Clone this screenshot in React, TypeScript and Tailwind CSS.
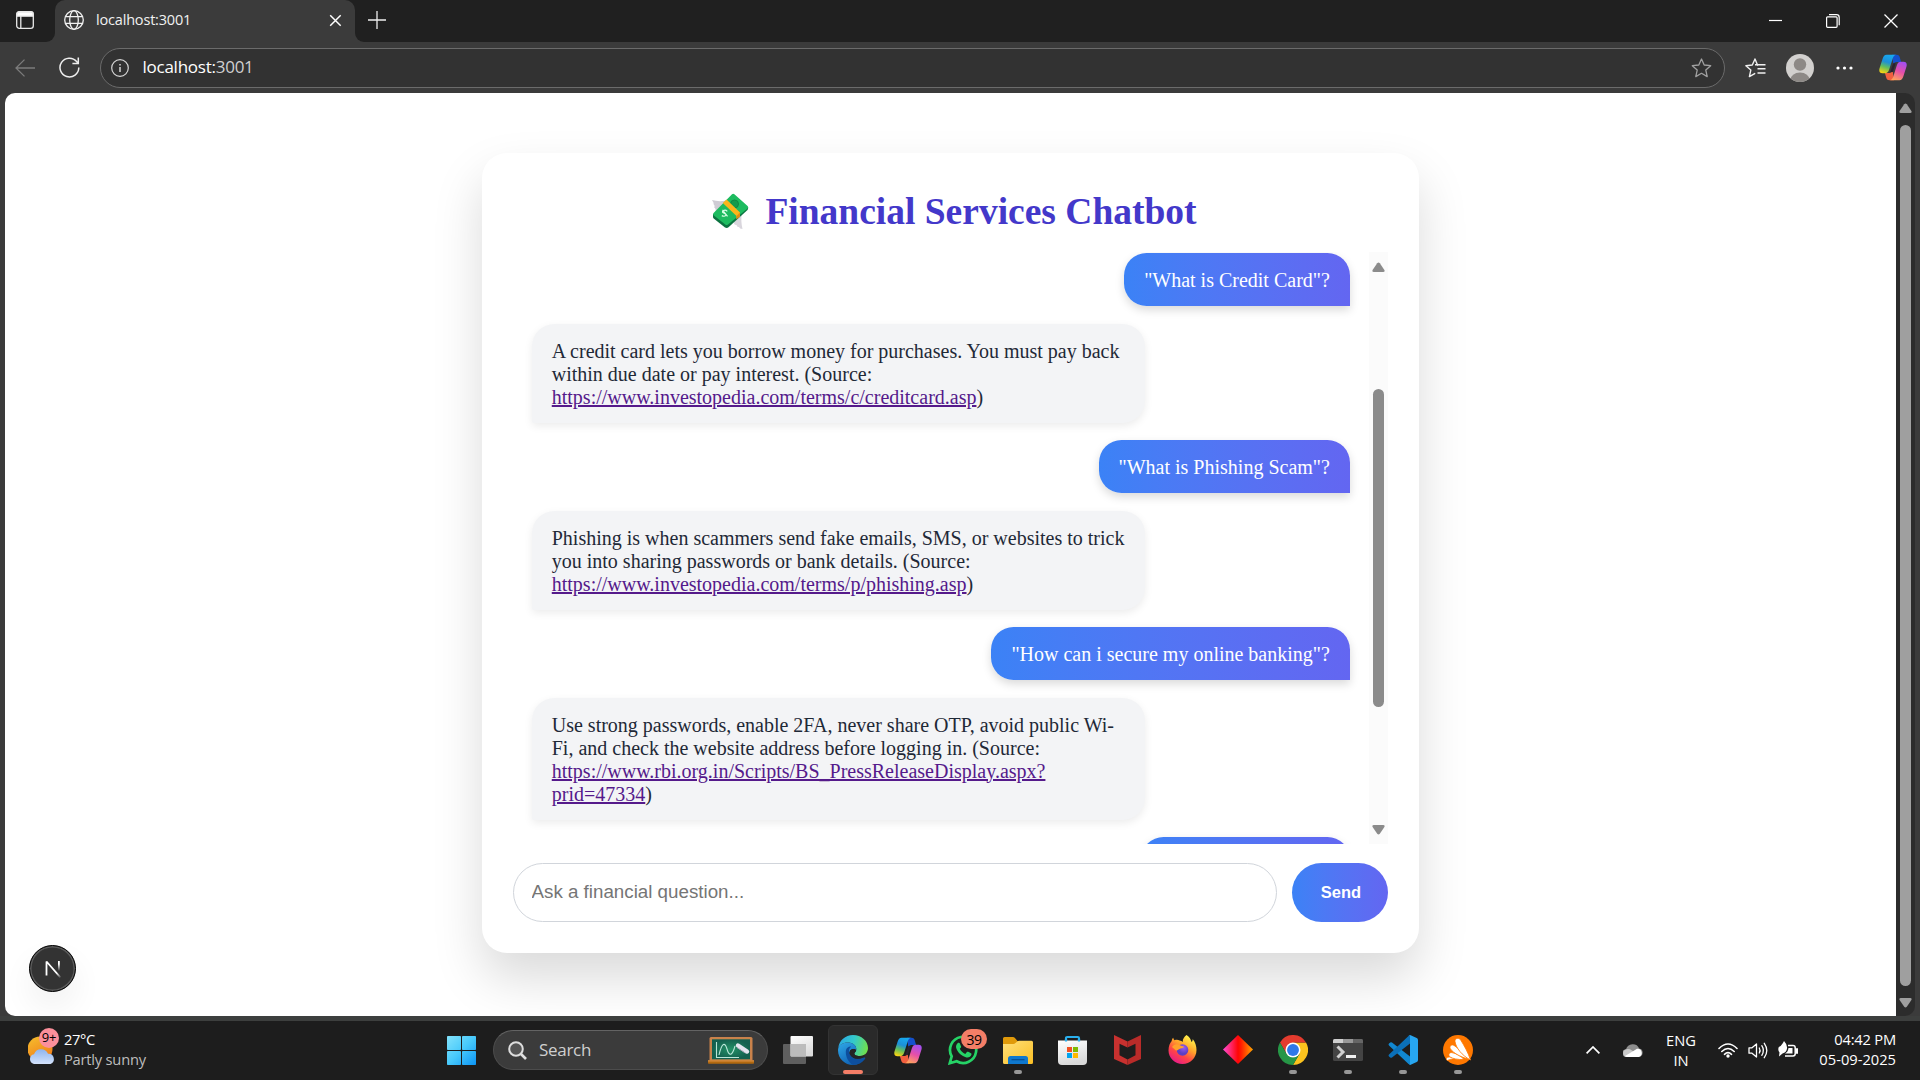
import React from "react";

const UI = "font-['Open_Sans','Noto_Sans',sans-serif]";

function TitleBar() {
  return (
    <div className="flex h-[42px] shrink-0 bg-[#3b3b3b]">
      <div className="flex h-[42px] w-[55px] items-center rounded-br-[9px] bg-[#202020] pl-4">
        <svg width="18" height="18" viewBox="0 0 18 18" className="-mt-0.5" fill="none" stroke="#e8e8e8" strokeWidth="1.3">
          <rect x="0.7" y="0.7" width="16.6" height="16.6" rx="2.6" />
          <path d="M1 2.8Q1 1 3 1h12q2 0 2 2v2.200H1z" fill="#fff" />
          <path d="M4.800 5v12" />
        </svg>
      </div>
      <div className="w-[300px] bg-[#202020]">
        <div className="flex h-[42px] items-center rounded-t-[10px] bg-[#3b3b3b] pl-[9px] pr-[13px]">
          <svg width="20" height="20" viewBox="0 0 20 20" className="-mt-[2px]" fill="none" stroke="#f1f1f1" strokeWidth="1.3">
            <circle cx="10" cy="10" r="9.3" />
            <ellipse cx="10" cy="10" rx="4.300" ry="9.300" />
            <path d="M1.500 6.700h17M1.500 13.300h17" />
          </svg>
          <span className={`${UI} ml-3 -mt-0.5 flex-1 text-[14.500px] leading-5 tracking-[-0.180px] text-[#f1f1f1]`}>localhost:3001</span>
          <svg width="13" height="13" viewBox="0 0 13 13" className="-mt-px" stroke="#fff" strokeWidth="1.500">
            <path d="M1.200 1.200l10.500 10.500M11.700 1.200L1.200 11.700" />
          </svg>
        </div>
      </div>
      <div className="flex flex-1 items-center rounded-bl-[9px] bg-[#202020] pl-[13px]">
        <svg width="18" height="18" viewBox="0 0 18 18" className="-mt-[3px]" stroke="#eee" strokeWidth="1.300">
          <path d="M9 0v18M0 9h18" />
        </svg>
        <div className="ml-auto flex items-center gap-[44px] pr-[22px]">
          <svg width="13" height="14" viewBox="0 0 13 14" stroke="#fff" strokeWidth="1.200"><path d="M0 6.500h13" /></svg>
          <svg width="14" height="14" viewBox="0 0 14 14" fill="none" stroke="#fff" strokeWidth="1.200">
            <rect x="0.600" y="2.800" width="10.500" height="10.500" rx="1" />
            <path d="M3 0.700h7.500q2.700 0 2.700 2.700v7.800" />
          </svg>
          <svg width="14" height="14" viewBox="0 0 14 14" stroke="#fff" strokeWidth="1.300"><path d="M0.500 0.500l13 13M13.500 0.500l-13 13" /></svg>
        </div>
      </div>
    </div>
  );
}

function CopilotIcon({ id }: { id: string }) {
  return (
    <svg width="28" height="27" viewBox="0 0 28 27">
      <defs>
        <linearGradient id={`${id}a`} x1="0.600" y1="0" x2="0.300" y2="1">
          <stop offset="0" stopColor="#17a9ef" /><stop offset="0.400" stopColor="#1d8fd8" /><stop offset="0.680" stopColor="#63bf5b" /><stop offset="1" stopColor="#f5d314" />
        </linearGradient>
        <linearGradient id={`${id}b`} x1="0.700" y1="0" x2="0.300" y2="1">
          <stop offset="0" stopColor="#a34ff0" /><stop offset="0.500" stopColor="#e64fa8" /><stop offset="1" stopColor="#ffa45c" />
        </linearGradient>
      </defs>
      <path d="M13 0.800h4.600c2 0 2.800 1.200 3.300 3l1.200 4.200h-4.600c-1.800 0-2.600 1-3.100 2.700z" fill="#1450cc" />
      <path d="M15 26.200h-4.600c-2 0-2.800-1.200-3.300-3l-1.200-4.200h4.600c1.800 0 2.600-1 3.100-2.700z" fill="#f2603f" />
      <path d="M7.500 0.800h9.500c-1.700.3-2.600 1.600-3.200 3.400l-3.600 11.300c-.9 2.700-1.900 3.700-4.400 3.700H3.500C.7 19.200-.2 17.200.5 14.500L3.600 4.800C4.500 2.200 5.600.8 7.500.8z" fill={`url(#${id}a)`} />
      <path d="M20.500 26.200H11c1.700-.3 2.600-1.600 3.200-3.400l3.600-11.300c.9-2.700 1.900-3.700 4.400-3.700h2.300c2.800 0 3.700 2 3 4.700l-3.100 9.700c-.9 2.600-2 4-3.900 4z" fill={`url(#${id}b)`} />
      <path d="M14.200 9.300l2.500 0-2.900 8.700h-2.500z" fill="#2a2230" />
    </svg>
  );
}

function Toolbar() {
  return (
    <div className="flex h-[51px] shrink-0 items-center bg-[#3b3b3b] pl-[15px] pr-[13px]">
      <svg width="20" height="18" viewBox="0 0 20 18" fill="none" stroke="#7c7c7c" strokeWidth="1.300"><path d="M20 9H1M9.500 0.600L1 9l8.500 8.400" /></svg>
      <svg width="21" height="21" viewBox="0 0 21 21" className="ml-[24px]" fill="none" stroke="#eee" strokeWidth="1.500">
        <path d="M19.800 10.500A9.400 9.400 0 1 1 17.600 4.500L19.300 6.300M19.300 0.500v5.900h-5.900" />
      </svg>
      <div className="ml-[20px] flex h-10 w-[1625px] items-center rounded-full border border-[#6b6b6b] bg-[#323232] pl-[10px] pr-[12px]">
        <svg width="18" height="18" viewBox="0 0 18 18" fill="none" stroke="#d6d6d6" strokeWidth="1.200">
          <circle cx="9" cy="9" r="8.300" /><path d="M9 8v5M9 5v1.400" strokeWidth="1.500" />
        </svg>
        <span className={`${UI} ml-[13.500px] -mt-px flex-1 text-[17px] leading-6 tracking-[-0.250px] text-white`}>localhost:<span className="text-[#d0d0d0]">3001</span></span>
        <svg width="21" height="20" viewBox="0 0 21 20" fill="none" stroke="#a0a0a0" strokeWidth="1.300" strokeLinejoin="round">
          <path d="M10.500 1l2.700 6 6.500.7-4.900 4.400 1.400 6.500-5.700-3.300-5.700 3.300 1.400-6.500L1.300 7.700 7.800 7z" />
        </svg>
      </div>
      <svg width="22" height="20" viewBox="0 0 22 20" className="ml-[20px]" fill="none" stroke="#f0f0f0" strokeWidth="1.400" strokeLinejoin="round">
        <path d="M12.500 7L10 1 7.300 7 .9 7.700l4.900 4.400-1.400 6.500 5.300-3" strokeLinecap="round" /><path d="M11 7.700h10.500M13.500 11.800h8M13.500 16h8" transform="translate(-1 -1)" />
      </svg>
      <svg width="28" height="28" viewBox="0 0 28 28" className="ml-[19px]">
        <defs><clipPath id="av"><circle cx="14" cy="14" r="14" /></clipPath></defs>
        <circle cx="14" cy="14" r="14" fill="#d2d0ce" />
        <circle cx="14" cy="10.500" r="6.200" fill="#8d8986" />
        <ellipse cx="14" cy="26" rx="9.700" ry="7.500" fill="#8d8986" clipPath="url(#av)" />
      </svg>
      <svg width="18" height="4" viewBox="0 0 18 4" className="ml-[21px]" fill="#fff"><circle cx="3" cy="2" r="1.600" /><circle cx="9.500" cy="2" r="1.600" /><circle cx="16" cy="2" r="1.600" /></svg>
      <span className="ml-auto"><CopilotIcon id="tb" /></span>
    </div>
  );
}

function UserMessage({ children }: { children: React.ReactNode }) {
  return (
    <div className="self-end whitespace-nowrap rounded-[22.5px] rounded-br-none bg-linear-to-r from-[#3b82f6] to-[#6366f1] px-5 pb-[14px] pt-4 text-xl leading-[23px] text-white shadow-[0_4px_10px_rgba(0,0,0,0.15)]">
      {children}
    </div>
  );
}

function BotMessage({ lines, link, tail }: { lines: string[]; link: string[]; tail: string }) {
  return (
    <div className="w-[613.5px] self-start whitespace-nowrap rounded-[22.5px] rounded-bl-[2px] bg-[#f3f4f6] px-5 pb-[14px] pt-4 text-xl leading-[23px] text-[#1f2937] shadow-[0_3px_8px_rgba(0,0,0,0.08)]">
      {lines.map((l) => <div key={l}>{l}</div>)}
      {link.map((l, i) => (
        <div key={l}>
          <a className="text-[#551a8b] underline">{l}</a>
          {i === link.length - 1 ? tail : null}
        </div>
      ))}
    </div>
  );
}

function Emoji() {
  return (
    <svg width="37" height="37" viewBox="0 0 37 37" className="shrink-0">
      <path d="M0 7q7 2 14 .5L9 14l-6 5q2-2-1-5 1.500-.5-.5-3Q2 10 0 7z" fill="#cfccd4" />
      <path d="M23 25l7-5q-1.500 7 .5 16-3 0-3.500-2-2 .5-2.500-2-2 0-2.500-1.500z" fill="#d9d6dd" />
      <path d="M1 21v3q0 1 1 1.800L13 34.500q2 1 3.500-.3L35.500 17q.8-1 .7-2.800z" fill="#0b7340" />
      <path d="M20 1.200q1.200-1 2.400 0L35.600 13q1.200 1.200 0 2.400L16 31.500q-1.400 1-2.700 0L1.600 22.200q-1.200-1.100 0-2.300z" fill="#1dbb5f" />
      <circle cx="22.500" cy="11" r="4" fill="#149a4c" stroke="#0f8843" />
      <path d="M10.800 10l3.700-3.500L28 19.500v4L24.500 26v-3z" fill="#fbb51b" />
      <path d="M24.500 23l3.500-3.500v4L24.500 26z" fill="#e58c12" />
      <path d="M15.300 18.300q-2-2-4-.5t.8 2.500 1.500 2.300-3.800 0M10.500 16.800l5 6.500" fill="none" stroke="#d9ffe6" strokeWidth="1.200" />
    </svg>
  );
}

function Arrow({ down, color }: { down?: boolean; color: string }) {
  return (
    <svg width="13" height="11" viewBox="0 0 13 11" className={down ? "rotate-180" : ""} fill={color}>
      <path d="M5.200 1.300q1.300-1.600 2.600 0l4.600 6.800q.8 1.900-1.200 1.900H1.800q-2 0-1.200-1.900z" />
    </svg>
  );
}

function ChatCard() {
  return (
    <div className="mt-[60px] flex h-[800px] w-[937.5px] shrink-0 flex-col rounded-[25px] bg-white px-[31.250px] pb-[31px] font-['Liberation_Serif',serif] shadow-[0_25px_50px_rgba(0,0,0,0.15)]">
      <h1 className="flex h-[99px] items-center justify-center gap-[16px] pl-[8px] pt-[17px] text-[37.5px] leading-[43px] font-bold text-[#4338ca]">
        <Emoji />
        <span>Financial Services Chatbot</span>
      </h1>
      <div className="flex h-[592px] overflow-hidden">
        <div className="flex flex-1 flex-col gap-[17.5px] pl-[18.75px] pr-[19.400px] pt-px [&>*]:shrink-0">
          <UserMessage>"What is Credit Card"?</UserMessage>
          <BotMessage
            lines={["A credit card lets you borrow money for purchases. You must pay back", "within due date or pay interest. (Source:"]}
            link={["https://www.investopedia.com/terms/c/creditcard.asp"]}
            tail=")"
          />
          <UserMessage>"What is Phishing Scam"?</UserMessage>
          <BotMessage
            lines={["Phishing is when scammers send fake emails, SMS, or websites to trick", "you into sharing passwords or bank details. (Source:"]}
            link={["https://www.investopedia.com/terms/p/phishing.asp"]}
            tail=")"
          />
          <UserMessage>"How can i secure my online banking"?</UserMessage>
          <BotMessage
            lines={["Use strong passwords, enable 2FA, never share OTP, avoid public Wi-", "Fi, and check the website address before logging in. (Source:"]}
            link={["https://www.rbi.org.in/Scripts/BS_PressReleaseDisplay.aspx?", "prid=47334"]}
            tail=")"
          />
          <UserMessage><span className="block h-[23px] w-[169px]" /></UserMessage>
        </div>
        <div className="flex w-[18.75px] flex-col items-center bg-[#fbfbfb] pb-[9px] pt-[10px]">
          <Arrow color="#8b8b8b" />
          <div className="mt-[116px] h-[318px] w-[11px] rounded-full bg-[#8b8b8b]" />
          <span className="mt-auto flex"><Arrow down color="#8b8b8b" /></span>
        </div>
      </div>
      <div className="mt-[19px] flex h-[59px] gap-[15px] font-['Liberation_Sans',sans-serif]">
        <input className="w-[764px] rounded-full border border-[#d1d5db] px-[17.5px] text-[18.750px] outline-none placeholder:text-[#757575]" placeholder="Ask a financial question..." />
        <button className="flex-1 rounded-full bg-linear-to-r from-[#3b82f6] to-[#6366f1] pl-[2px] text-[16.500px] font-bold text-white">Send</button>
      </div>
    </div>
  );
}

function DevBadge() {
  return (
    <div className="absolute bottom-[24px] left-[24px] flex size-[47px] items-center justify-center rounded-full border border-black bg-[#333] shadow-[inset_0_0_0_1.500px_#5a5a5a,0_16px_32px_rgba(0,0,0,0.06)]">
      <svg width="16" height="18" viewBox="0 0 16 18" fill="none" strokeWidth="1.800">
        <defs>
          <linearGradient id="nv" x1="0" y1="0" x2="0" y2="1"><stop offset="0.300" stopColor="#fff" /><stop offset="1" stopColor="#fff" stopOpacity="0" /></linearGradient>
          <linearGradient id="nd" gradientUnits="userSpaceOnUse" x1="2" y1="1" x2="16" y2="18"><stop offset="0.700" stopColor="#fff" /><stop offset="1" stopColor="#fff" stopOpacity="0" /></linearGradient>
        </defs>
        <path d="M1.500 15.500V1.500L15.500 17.500" stroke="url(#nd)" strokeLinejoin="bevel" />
        <rect x="13" y="1" width="1.800" height="10" fill="url(#nv)" />
      </svg>
    </div>
  );
}

function Cell({ children, open, active }: { children: React.ReactNode; open?: boolean; active?: boolean }) {
  return (
    <div className="relative flex h-[58px] w-[55px] items-center justify-center">
      {active && <div className="absolute left-[2.500px] top-[4px] size-[50px] rounded-[6px] border border-[#333] bg-[#2a2a2a]" />}
      <div className="relative flex">{children}</div>
      {open && <div className="absolute bottom-[5px] left-[23.500px] h-1 w-2 rounded-full bg-[#979797]" />}
      {active && <div className="absolute bottom-[5px] left-[17.500px] h-1 w-5 rounded-full bg-[#f47e67]" />}
    </div>
  );
}

function StartIcon() {
  return (
    <svg width="29" height="29" viewBox="0 0 29 29">
      <defs><linearGradient id="st" gradientUnits="userSpaceOnUse" x1="0" y1="0" x2="29" y2="29"><stop offset="0" stopColor="#83e3fb" /><stop offset="0.500" stopColor="#47c9fb" /><stop offset="1" stopColor="#0c94f5" /></linearGradient></defs>
      <g fill="url(#st)"><rect width="14" height="14" rx="0.800" /><rect x="15" width="14" height="14" rx="0.800" /><rect y="15" width="14" height="14" rx="0.800" /><rect x="15" y="15" width="14" height="14" rx="0.800" /></g>
    </svg>
  );
}

function SearchBox() {
  return (
    <div className="ml-[4.500px] mr-[2.500px] flex h-10 w-[275px] items-center rounded-full border border-[#4c4c4c] border-t-[#636363] bg-[#3b3b3b] pl-[14px] pr-[13px]">
      <svg width="19" height="19" viewBox="0 0 19 19" fill="none" stroke="#dedede" strokeWidth="2"><circle cx="8" cy="8" r="6.800" fill="#555" /><path d="M13 13l5 5" strokeWidth="2.600" /></svg>
      <span className={`${UI} ml-[12px] flex-1 text-[17px] leading-6 tracking-[-0.3px] text-[#cfcfcf]`}>Search</span>
      <svg width="46" height="28" viewBox="0 0 46 28">
        <defs><radialGradient id="bd"><stop offset="0" stopColor="#239066" /><stop offset="1" stopColor="#14604f" /></radialGradient></defs>
        <rect x="1.500" y="1" width="43" height="24" rx="1.500" fill="#c9824b" />
        <rect x="4" y="3.300" width="38" height="20" fill="url(#bd)" />
        <path d="M8.500 6v15.500H31M11 19C14 6 17 6 19 13S24 21 27 10" fill="none" stroke="#b9e6d8" strokeWidth="1.100" />
        <path d="M30 9.500l9 6" stroke="#e4e4ee" strokeWidth="4.500" strokeLinecap="round" />
        <path d="M29 11.500l8.500 5.700" stroke="#aaa8b8" strokeWidth="1" />
        <rect x="0" y="24.300" width="46" height="3.400" rx="0.800" fill="#b3690f" /><rect x="0" y="24.300" width="46" height="1.200" fill="#d98f45" />
      </svg>
    </div>
  );
}

function TaskViewIcon() {
  return (
    <svg width="30" height="28" viewBox="0 0 30 28">
      <defs><linearGradient id="tv" x1="0" y1="0" x2="0.500" y2="1"><stop offset="0" stopColor="#fff" /><stop offset="1" stopColor="#dcdcdc" /></linearGradient></defs>
      <rect y="8" width="23" height="20" rx="1" fill="#5f5f5f" />
      <rect x="7.500" width="22.500" height="20.500" rx="1" fill="url(#tv)" />
      <path d="M7.500 8H23v12.500H8.500q-1 0-1-1z" fill="#bcbcbc" />
    </svg>
  );
}

function EdgeIcon() {
  return (
    <svg width="30" height="30" viewBox="0 0 30 30">
      <defs>
        <linearGradient id="e1" x1="0" y1="0.300" x2="1" y2="0.500"><stop offset="0" stopColor="#2ba9e6" /><stop offset="0.500" stopColor="#34c9ca" /><stop offset="1" stopColor="#6fe04d" /></linearGradient>
        <linearGradient id="e2" x1="0" y1="0" x2="0.600" y2="1"><stop offset="0" stopColor="#2fa8e8" /><stop offset="1" stopColor="#0f62b4" /></linearGradient>
      </defs>
      <path d="M0.300 13C1.200 5.500 7.200 0 15 0c8.500 0 15 6 15 13 0 5-3.800 8-8.300 8-3.900 0-5.700-1.500-5.300-2.800.3-.9 1.900-1.600 1.900-4.100C18.300 10 14.300 7.500 9.500 7.500 5 7.500 1.200 10 .3 13z" fill="url(#e1)" />
      <path d="M0.100 14C.8 9.800 5 7.500 9.500 7.500c4.800 0 8.800 2.500 8.800 6.600 0 .5-.1.900-.2 1.300-1-2.400-6.700-2.400-6.700 3.400 0 5.200 4.600 10.800 10.800 9.300C19.800 29.400 17.500 30 15 30 6.500 30-.8 23 .1 14z" fill="url(#e2)" />
      <path d="M7.800 17c0-4 2.500-5.500 5.300-5.500-2.400 2-2.600 5-1.300 7.500 2 4 7.500 6.300 13.500 3.800 1.700-.7 2.500.1 1.700 1.300C24.300 28 20 30 15 30 10.500 27.500 7.800 22 7.800 17z" fill="#0d4f9e" />
      <path d="M12 15.500c1.500-2 5-2 6.200-.6 0 2-1.600 2.500-1.800 3.300-.4 1.300 1.400 2.800 5.300 2.800 2 0 3.800-.6 5.200-1.600-.5 1.700-1.300 2.500-2 3C19 25 14 23.500 12 19.500q-1-2 0-4z" fill="#242424" />
    </svg>
  );
}

function WhatsAppIcon() {
  return (
    <div className="relative">
      <svg width="30" height="30" viewBox="0 0 30 30" fill="none">
        <path d="M1.800 28.200L3.700 21.300A13.100 13.100 0 1 1 8.700 26.300z" stroke="#25d366" strokeWidth="2.700" />
        <path d="M9.600 8.300c.5-.6 1.900-.7 2.300.2l1.200 2.900c.2.500-.1 1.100-1.300 2.300 1.300 2.600 2.800 4 5.500 5.200l1.600-1.900c.4-.5.900-.4 1.300-.2l2.800 1.400c.6.300.6 1 .3 1.900-.6 1.800-2.800 2.800-4.900 2.300C13.500 21.200 9.800 17.600 8.200 13c-.5-1.800.1-3.500 1.400-4.700z" fill="#25d366" />
      </svg>
      <div className={`${UI} absolute -top-[6px] left-[13px] flex h-5 w-[26px] items-center justify-center rounded-full bg-[#f47e67] text-[14px] tracking-[-0.400px] text-black`}>39</div>
    </div>
  );
}

function ExplorerIcon() {
  return (
    <svg width="30" height="27" viewBox="0 0 30 27" className="mt-[1px]">
      <defs><linearGradient id="ex" x1="0" y1="0" x2="1" y2="1"><stop offset="0" stopColor="#ffe07a" /><stop offset="1" stopColor="#fbbf24" /></linearGradient></defs>
      <path d="M0 1.500Q0 0 1.500 0H10q1 0 1.700.8L15 4.500V11H0z" fill="#e09a0a" />
      <path d="M0 7h10.500q1 0 1.700-.8l2-1.700q.8-.7 1.800-.7h12.500Q30 3.800 30 5.300V25.500q0 1.500-1.500 1.500h-27Q0 27 0 25.500z" fill="url(#ex)" />
      <path d="M5 27v-5.500Q5 19 7.500 19h15q2.500 0 2.500 2.500V27z" fill="#0f78ce" />
      <path d="M8.500 22.700h13" stroke="#084d91" strokeWidth="1.200" />
    </svg>
  );
}

function StoreIcon() {
  return (
    <svg width="29" height="30" viewBox="0 0 29 30" className="mr-px">
      <defs><linearGradient id="so" x1="0" y1="0" x2="0.300" y2="1"><stop offset="0" stopColor="#fff" /><stop offset="1" stopColor="#d9d9d9" /></linearGradient></defs>
      <path d="M8 7V3.300Q8 2 9.300 2h10.400Q21 2 21 3.300V7" fill="none" stroke="#2ab0ee" strokeWidth="2.200" />
      <path d="M0 5.500h29V26q0 4-4 4H4q-4 0-4-4z" fill="url(#so)" />
      <path d="M8 6.500V4M21 6.500V4" stroke="#2ab0ee" strokeWidth="2.200" />
      <rect x="9" y="12" width="5" height="5" fill="#f25022" /><rect x="15" y="12" width="5" height="5" fill="#7fba00" /><rect x="9" y="18" width="5" height="5" fill="#00a4ef" /><rect x="15" y="18" width="5" height="5" fill="#ffb900" />
    </svg>
  );
}

function McAfeeIcon() {
  return (
    <svg width="27" height="30" viewBox="0 0 27 30" className="mr-px">
      <path d="M0 0L13.500 6.500V12.500L5.500 8.700V20.200L13.500 24.500V30L0 24z" fill="#c8312f" />
      <path d="M27 0L13.500 6.500V12.500L21.500 8.700V20.200L13.500 24.500V30L27 24z" fill="#b92b29" />
    </svg>
  );
}

function FirefoxIcon() {
  return (
    <svg width="29" height="30" viewBox="0 0 29 30" className="mr-px">
      <defs>
        <linearGradient id="ff" x1="0.800" y1="0.100" x2="0.250" y2="1"><stop offset="0" stopColor="#fff04a" /><stop offset="0.350" stopColor="#ffa32a" /><stop offset="0.650" stopColor="#ff4545" /><stop offset="1" stopColor="#e5178f" /></linearGradient>
        <radialGradient id="fp" cx="0.600" cy="0.300"><stop offset="0" stopColor="#9a5cf0" /><stop offset="1" stopColor="#5c3fc4" /></radialGradient>
      </defs>
      <path d="M18.500 0c3 2 4.500 4.500 5 7 1-.7 1.300-2 1.200-3 2.600 3 3.800 7 3.800 11C28.500 23 22 29 14.500 29S.500 23 .500 15.500C.500 11 2 8 3.700 6c.1-1.500.8-2.800 1.500-3.300.2 1.200.7 2 1.400 2.500 1.700-.6 3.600-.5 5 .2 1.400.3 2.400.8 3.100 1.500C14.500 4 16.500 1.500 18.500 0z" fill="url(#ff)" />
      <circle cx="14.500" cy="15" r="5.800" fill="url(#fp)" />
      <path d="M4 12c2-3 5-3.500 7.500-2 1.500.9 3.500 1.500 4.500 1.400-.5 1.500-2 1.800-3.500 2-1.700.3-2 1.800-4.500 2.100z" fill="#ffa12b" />
    </svg>
  );
}

function DiamondIcon() {
  return (
    <svg width="30" height="30" viewBox="0 0 30 30">
      <defs><linearGradient id="dm"><stop offset="0" stopColor="#ff4bd8" /><stop offset="0.500" stopColor="#ff0505" /><stop offset="0.600" stopColor="#ff1c00" /><stop offset="1" stopColor="#ffa600" /></linearGradient></defs>
      <path d="M15 0l15 14.500L15 29 0 14.500z" fill="url(#dm)" />
    </svg>
  );
}

function ChromeIcon() {
  return (
    <svg width="30" height="30" viewBox="0 0 48 48">
      <path d="M34.400 30L24 48A24 24 0 0 0 44.800 12H24z" fill="#fcc31e" />
      <path d="M3.200 12L13.600 30 24 24V12h20.800A24 24 0 0 0 3.200 12z" fill="#e33b2e" />
      <path d="M3.200 12L13.600 30 24 36 34.400 30 24 48A24 24 0 0 1 3.200 12z" fill="#269646" />
      <circle cx="24" cy="24" r="12" fill="#fff" /><circle cx="24" cy="24" r="9.500" fill="#2f78e8" />
    </svg>
  );
}

function TerminalIcon() {
  return (
    <svg width="30" height="22" viewBox="0 0 30 22">
      <rect width="30" height="22" rx="1.500" fill="#444" />
      <path d="M1.500 0H10v4H0V1.500Q0 0 1.500 0z" fill="#cfcfcf" /><rect x="10" width="10" height="4" fill="#989898" /><path d="M20 0h8.500Q30 0 30 1.500V4H20z" fill="#666" />
      <path d="M4.500 7.500l5.500 5.500-5.500 5.500" fill="none" stroke="#d0d0d0" strokeWidth="3" /><rect x="13" y="16" width="10" height="3" fill="#f0f0f0" />
    </svg>
  );
}

function CodeIcon() {
  return (
    <svg width="30" height="30" viewBox="0 0 30 30">
      <path d="M1 10.500q-1-1 0-2l1.200-1q.8-.7 1.800 0L22 21.500V29.500L20.500 29z" fill="#1187d0" />
      <path d="M1 19.500q-1 1 0 2l1.200 1q.8.700 1.800 0L22 8.500V.5L20.500 1z" fill="#0b70b8" />
      <path d="M20.500 29.500q1 .8 2.200.3l6-2.900q1.300-.6 1.300-2V5.100q0-1.400-1.300-2l-6-2.900q-1.200-.5-2.200.3 1.500-.6 1.500 1.300v26.400q0 1.900-1.500 1.300z" fill="#27a6f0" />
    </svg>
  );
}

function AvastIcon() {
  return (
    <svg width="30" height="30" viewBox="0 0 30 30">
      <circle cx="15" cy="15" r="15" fill="#ff7800" />
      <g fill="#fff" stroke="#ff7800" strokeWidth="0.800">
        <path d="M13 24c-3.500-.3-6 .2-8.700 1.600-1.600-1.200-1.200-3 .4-3.400C7.500 21.500 10.500 22.500 13 24z" />
        <path d="M21 24.500c-6.500.3-11-.8-14-2.600-2.200-1.400-1-4.700 1.800-4.300C13 18.200 18 21 21 24.500z" />
        <path d="M25 24C16.500 21.500 10.500 18 7.500 14c-1.700-2.400.9-5.300 3.500-3.600C16 13.500 21.500 19 25 24z" />
        <path d="M27.500 25C19 20.500 13 13 12 6.500c-.4-3.200 3.800-4.500 5.700-1.500C21 10.500 25 17 27.500 25z" />
      </g>
    </svg>
  );
}

function Weather() {
  return (
    <div className="flex h-[58px] w-[433.5px] items-center pl-[28px]">
      <div className="relative">
        <svg width="28" height="28" viewBox="0 0 28 28">
          <defs>
            <linearGradient id="sn" x1="0.200" y1="0" x2="0.700" y2="1"><stop offset="0" stopColor="#f5bb2c" /><stop offset="1" stopColor="#f07a1a" /></linearGradient>
            <linearGradient id="cl" x1="0" y1="0" x2="0" y2="1"><stop offset="0" stopColor="#8db4ef" /><stop offset="1" stopColor="#d3e2fb" /></linearGradient>
          </defs>
          <circle cx="12" cy="13" r="12.500" fill="url(#sn)" />
          <path d="M6 28a5 5 0 0 1 0-9.800A7.500 7.500 0 0 1 20 17.800 5.300 5.300 0 0 1 22.500 28z" fill="url(#cl)" />
        </svg>
        <div className={`${UI} absolute -top-[8px] left-[11px] flex size-5 items-center justify-center rounded-full bg-[#fb8f9b] text-[13px] tracking-[-0.300px] text-black`}>9+</div>
      </div>
      <div className={`${UI} -mt-[2px] ml-2 text-[14.700px] leading-5`}>
        <div className="tracking-[-0.4px] text-white">27°C</div>
        <div className="tracking-[-0.220px] text-[#bdbdbd]">Partly sunny</div>
      </div>
    </div>
  );
}

function Tray() {
  return (
    <div className={`${UI} ml-auto flex h-[58px] items-center pr-6 text-[14.700px] leading-5 text-white`}>
      <svg width="14" height="8" viewBox="0 0 14 8" fill="none" stroke="#fff" strokeWidth="1.700"><path d="M0.600 7.300L7 1l6.400 6.300" /></svg>
      <svg width="20" height="13" viewBox="0 0 20 13" className="ml-[23px]">
        <path d="M3.800 13A3.800 3.800 0 0 1 3 5.300 7 7 0 0 1 16.200 4.500 4.300 4.300 0 0 1 15.500 13z" fill="#8e8e8e" />
        <path d="M3.800 13A3.900 3.900 0 0 1 2.500 5.500Q6 4.200 9 6.500L14 10z" fill="#c9c9c9" />
        <path d="M2 12l8-4.800 4-2.400a4.200 4.200 0 0 1 1.700 8.200H4q-1.200 0-2-1z" fill="#fff" />
      </svg>
      <div className="-mt-[1px] ml-[23px] w-[30px] text-center"><div>ENG</div><div>IN</div></div>
      <svg width="20" height="15" viewBox="0 0 20 15" className="ml-[22px]" fill="none" stroke="#fff" strokeWidth="1.600" strokeLinecap="round">
        <path d="M1 5.500Q10-3.500 19 5.500M3.800 8.500q6.200-6 12.400 0M6.500 11.300q3.500-3.200 7 0" /><circle cx="10" cy="13" r="1.700" fill="#fff" stroke="none" />
      </svg>
      <svg width="20" height="17" viewBox="0 0 20 17" className="ml-[10px]" fill="none" stroke="#fff" strokeWidth="1.300" strokeLinecap="round">
        <path d="M1 5.800h3L8.500 2v13L4 11.200H1z" strokeLinejoin="round" /><path d="M11.300 6q1.600 2.500 0 5M13.800 3.700q3.200 4.800 0 9.600" /><path d="M16.300 1.300q5 7.200 0 14.400" />
      </svg>
      <svg width="20" height="16" viewBox="0 0 20 16" className="-mt-[3px] ml-[10px]" fill="none" stroke="#fff" strokeWidth="1.500">
        <path d="M10 4.500h5q2.200 0 2.200 2.200v6.100q0 2.200-2.200 2.200H7" /><path d="M18.300 8v4h1.200V8z" /><path d="M10.500 7h4v5.500H7q3-1.500 3.500-5.500z" fill="#fff" stroke="none" />
        <path d="M6 0q3.500 3.500 3 7.500-.500 4-4.500 5L1 15.500l.5-4Q-.5 9 .8 6q2.200-1 3-2.500Q5 2 6 0z" fill="#fff" stroke="none" />
      </svg>
      <div className="-mt-[3px] ml-[20px] w-[78px] whitespace-nowrap text-right"><div className="tracking-[-0.200px]">04:42 PM</div><div>05-09-2025</div></div>
    </div>
  );
}

export default function App() {
  return (
    <div className="flex h-[1080px] w-[1920px] flex-col overflow-hidden bg-[#3b3b3b]">
      <TitleBar />
      <Toolbar />
      <div className="flex h-[923px] shrink-0 pl-[5px] pr-[5px]">
        <main className="relative flex w-[1891px] justify-center overflow-hidden rounded-l-[10px] bg-white">
          <ChatCard />
          <DevBadge />
        </main>
        <div className="flex w-[19px] flex-col items-center rounded-r-[10px] bg-[#2c2c2c] pb-[8px] pt-[10px]">
          <Arrow color="#9f9f9f" />
          <div className="my-[11px] w-[11px] flex-1 rounded-full bg-[#9f9f9f]" />
          <Arrow down color="#9f9f9f" />
        </div>
      </div>
      <div className="h-[5px] shrink-0 bg-[#3d3f3e]" />
      <div className="flex h-[59px] shrink-0 bg-[#1d1d1d]">
        <Weather />
        <div className="flex h-[58px] items-center">
          <Cell><StartIcon /></Cell>
          <SearchBox />
          <Cell><TaskViewIcon /></Cell>
          <Cell active><EdgeIcon /></Cell>
          <Cell><CopilotIcon id="tk" /></Cell>
          <Cell><WhatsAppIcon /></Cell>
          <Cell open><ExplorerIcon /></Cell>
          <Cell><StoreIcon /></Cell>
          <Cell><McAfeeIcon /></Cell>
          <Cell><FirefoxIcon /></Cell>
          <Cell><DiamondIcon /></Cell>
          <Cell open><ChromeIcon /></Cell>
          <Cell open><TerminalIcon /></Cell>
          <Cell open><CodeIcon /></Cell>
          <Cell open><AvastIcon /></Cell>
        </div>
        <Tray />
      </div>
    </div>
  );
}
